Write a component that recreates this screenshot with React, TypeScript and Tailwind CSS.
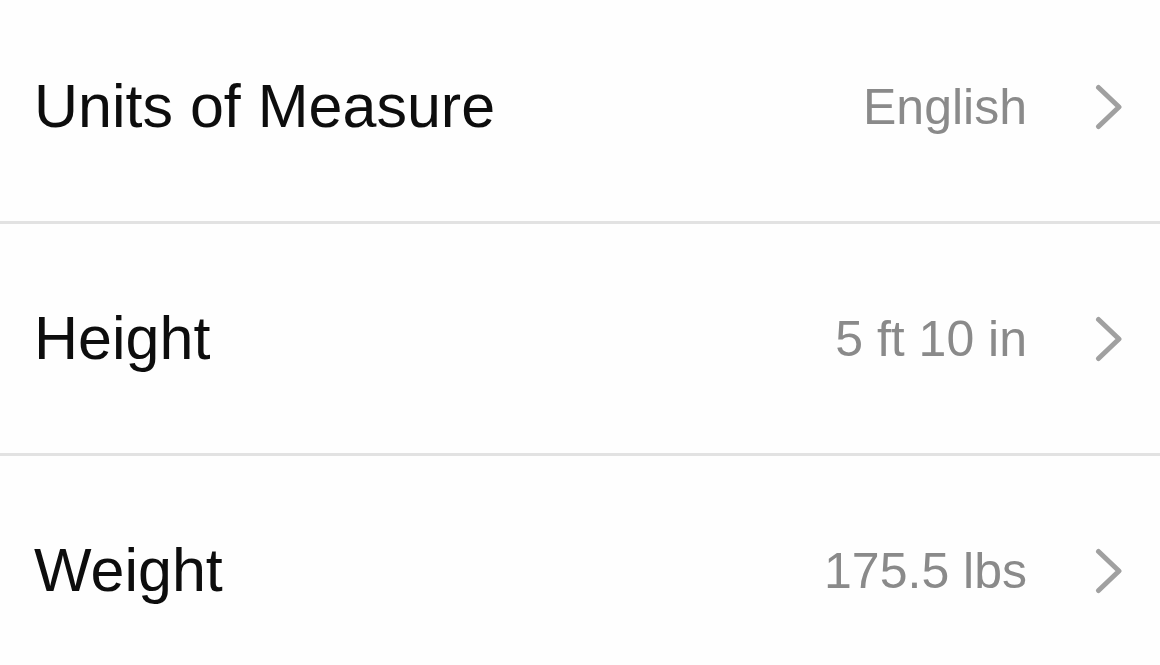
const rows = [
  { label: "Units of Measure", value: "English" },
  { label: "Height", value: "5 ft 10 in" },
  { label: "Weight", value: "175.5 lbs" },
];

const Chevron = () => (
  <svg width="28" height="46" viewBox="0 0 28 46" fill="none" className="shrink-0">
    <path d="M3.5 3.5 L24 23 L3.5 42.5" stroke="#a0a0a0" strokeWidth="5" strokeLinecap="round" strokeLinejoin="round" />
  </svg>
);

export default function App() {
  return (
    <div className="w-[1160px] h-[665px] overflow-hidden bg-[#fefefe] font-['Liberation_Sans',Arial,sans-serif]">
      <div className="-mt-2">
        {rows.map((row) => (
          <div
            key={row.label}
            className="h-[232px] flex items-center pl-[34px] pr-[37px] border-b-[3px] border-[#e2e2e2]"
          >
            <span className="text-[61px] text-[#0d0d0d] leading-none">{row.label}</span>
            <span className="ml-auto text-[50px] text-[#8a8a8a] leading-none">{row.value}</span>
            <div className="ml-[68px]">
              <Chevron />
            </div>
          </div>
        ))}
      </div>
    </div>
  );
}
